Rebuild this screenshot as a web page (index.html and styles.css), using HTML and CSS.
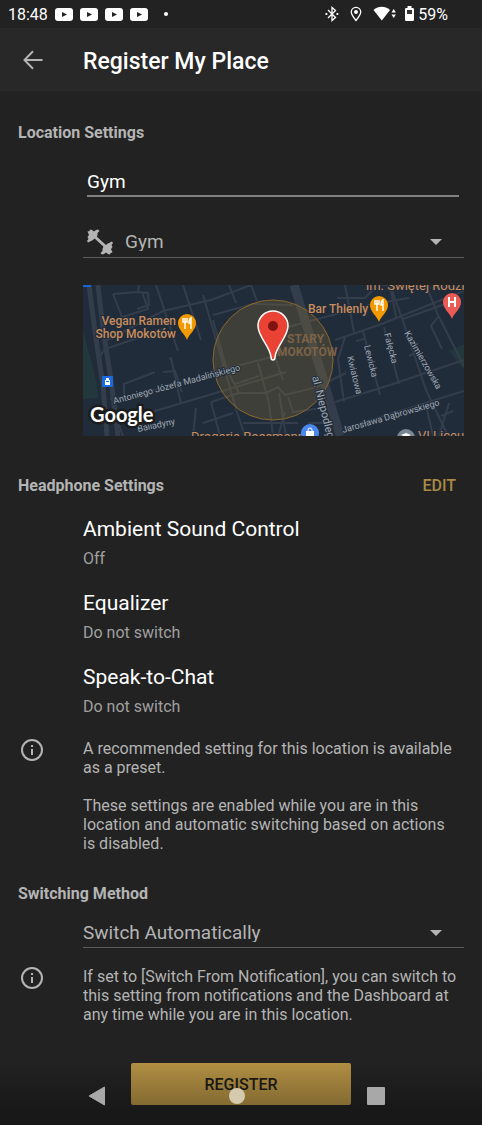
FILE: index.html
```html
<!DOCTYPE html>
<html lang="en">
<head>
<meta charset="utf-8">
<meta name="viewport" content="width=device-width, initial-scale=1">
<title>Register My Place</title>
<link rel="stylesheet" href="styles.css">
</head>
<body>
<div class="status">
  <span class="clock">18:48</span>
  <span class="notices">
    <svg class="video" viewBox="0 0 18 13"><rect width="18" height="13" rx="3"/><path d="M7 4l5 2.5L7 9z"/></svg>
    <svg class="video" viewBox="0 0 18 13"><rect width="18" height="13" rx="3"/><path d="M7 4l5 2.5L7 9z"/></svg>
    <svg class="video" viewBox="0 0 18 13"><rect width="18" height="13" rx="3"/><path d="M7 4l5 2.5L7 9z"/></svg>
    <svg class="video" viewBox="0 0 18 13"><rect width="18" height="13" rx="3"/><path d="M7 4l5 2.5L7 9z"/></svg>
  </span>
  <span class="more"></span>
  <span class="signals">
    <svg width="14" height="16" viewBox="0 0 14 16" fill="none" stroke="#fff" stroke-width="1.3"><path d="M3 4l7.500 7.500L7 14.500V1.500l3.500 3L3 12"/><path d="M0.500 8h1.800M11.500 8h1.800" stroke-width="2"/></svg>
    <svg width="12" height="16" viewBox="0 0 12 16" fill="none" stroke="#fff" stroke-width="1.300"><path d="M6 14.500C3 10.800 1.300 8.300 1.300 6a4.700 4.700 0 0 1 9.400 0c0 2.300-1.700 4.800-4.700 8.500z"/><circle cx="6" cy="6" r="1.300" fill="#fff"/></svg>
    <svg width="24" height="16" viewBox="0 0 24 16" fill="#fff"><path d="M0.500 4C5.500-.3 12-.3 17 4L8.800 14.500z"/><path d="M18.500 6.500L20.700 3l2.200 3.500zM18.500 8.500h4.400L20.700 12z"/></svg>
    <svg width="9" height="16" viewBox="0 0 9 16"><path d="M2.500 0h4v2h1.200q1.300 0 1.300 1.300v10.400q0 1.300-1.300 1.300H1.300Q0 15 0 13.700V3.300Q0 2 1.300 2h1.200z" fill="#fff"/><path d="M2 4h5v4H2z" fill="#333"/></svg>
    <span class="battery">59%</span>
  </span>
</div>

<header class="appbar">
  <button class="back" type="button" aria-label="Back">
    <svg width="20" height="20" viewBox="0 0 20 20" fill="none" stroke="#b4b4b4" stroke-width="2"><path d="M19.500 10H2M10 1.200L1.500 10l8.500 8.800"/></svg>
  </button>
  <h1>Register My Place</h1>
</header>

<main>
  <section class="location">
    <h2>Location Settings</h2>
    <div class="fields">
      <input class="name" type="text" value="Gym" aria-label="Place name">
      <div class="picker kind">
        <svg class="dumbbell" viewBox="0 0 26 26" fill="#b4b4b4"><path d="M7 7l12 11" stroke="#b4b4b4" stroke-width="3"/><path d="M0.500 2.500L2.500 2 3 .5 5 1l2 1.500L9 1l2-.5 1.500 1.500-2 2V6l-1 2.500L7.500 9.500 6 11l-3 1.500L1 13.500 0 12l1.500-2L.5 8 2 6z"/><path d="M25.500 23.500L23.500 24l-.5 1.500-2-.5-2-1.500-2 1.500-2 .5-1.500-1.500 2-2V20l1-2.500 2-1 1.500-1.500 3-1.500 2-1 1 1.500-1.500 2 1 2-1.500 2z"/></svg>
        <select aria-label="Place type"><option>Gym</option></select>
        <svg class="caret" viewBox="0 0 12 6"><path d="M0 0h12L6 6z"/></svg>
      </div>
      <svg class="map" viewBox="0 0 381 151" role="img" aria-label="Map of the place">
        <rect width="381" height="151" fill="#212c3b"/>
        <path d="M0 45C6 70 15 95 15 113L0 114z" fill="#22383c"/>
        <path d="M381 59l-15 7 15 19z" fill="#22383c"/>
        <g fill="none" stroke="#333d4b" stroke-width="2">
          <path d="M6 0C12 50 17 80 20 100l4 51M15 0c5 50 10 75 13 95l7 56" stroke-width="5"/>
          <path d="M211 0l28 90 18 61" stroke-width="9"/>
          <path d="M20 65L80 44M20 57l60-31 48-11 40-15M20 66l-4 8M30 9l25-2 1-7M30 9l9 23 26-8-6-17M55 7l10 1 1 12-12 4M73 0l22 66M100 0l18 55M146 0l7 18M168 0l6 16"/>
          <path d="M40 151l-5-14 118-35 50-15M41 113V99l31-12M80 87l12-1 7 21M86 74l2-1 10 46M130 35l14 50 12 23-28 9M128 117l9 34M155 108h28l12-6 7 8 32-8 29-14M190 66l10 29M175 78l11 40 4 33M196 108l7 43M152 99l24-8M160 138h55M205 112l5 15 30-4M120 10l34 117 8 24"/>
          <path d="M27 114c50-8 80-19 119-31l58-15M130 30l40-11 40 1M205 42l85-23 36-6M252 55l44-15L381 6M252 117l55-17 74-25M262 143l119-37M321 0l-22 0M262 52l-7 22 6 43M262 0l9 47M280 46l17 64M301 42l15 57M307 0l13 36 23 69 22 46M343 0l12 30 26 51M355 32l-7 9 11 23M307 0l6 32M320 34l51-18M343 120l7 31M366 118l-10 33M254 13h28l10-10M326 71l8-4M358 131l12-5M273 56l8-2M110 151l3-28M195 151l7-24M150 128l-30 10M225 138h22"/>
        </g>
        <circle cx="190" cy="75" r="60" fill="#aa8431" fill-opacity=".22" stroke="#8b672b"/>
        <g class="poi">
          <text x="93" y="40" text-anchor="end">Vegan Ramen</text>
          <text x="93" y="53" text-anchor="end">Shop Mokotów</text>
          <text x="225" y="28">Bar Thienly</text>
          <text x="283" y="5" class="wide">im. Świętej Rodziny</text>
          <text x="108" y="156" class="wide">Drogeria Rossmann</text>
          <text x="335" y="155" class="wide">VI Liceum</text>
        </g>
        <g class="district"><text x="204" y="58">STARY</text><text x="194" y="71">MOKOTÓW</text></g>
        <g class="street">
          <text transform="translate(31 119) rotate(-15)">Antoniego Józefa Madalińskiego</text>
          <text transform="translate(55 147) rotate(-12)">Balladyny</text>
          <text transform="translate(229 92) rotate(76)" class="avenue">al. Niepodległości</text>
          <text transform="translate(264 72) rotate(76)">Kwiatowa</text>
          <text transform="translate(281 61) rotate(76)">Lewicka</text>
          <text transform="translate(301 49) rotate(75)">Fałęcka</text>
          <text transform="translate(321 48) rotate(60)">Kazimierzowska</text>
          <text transform="translate(260 148) rotate(-16)">Jarosława Dąbrowskiego</text>
        </g>
        <g transform="translate(104 38)"><path d="M0 17C-2 11-9 7-9 0a9 9 0 0 1 18 0C9 7 2 11 0 17z" fill="#f29900"/><path d="M-4-5v4h4v-4M-2-5V6M4 6V-5Q2-4 2 0h2" fill="none" stroke="#fff" stroke-width="1.400"/></g>
        <g transform="translate(296 20)"><path d="M0 17C-2 11-9 7-9 0a9 9 0 0 1 18 0C9 7 2 11 0 17z" fill="#f29900"/><path d="M-4-5v4h4v-4M-2-5V6M4 6V-5Q2-4 2 0h2" fill="none" stroke="#fff" stroke-width="1.400"/></g>
        <g transform="translate(369 17)"><path d="M0 17C-2 11-9 7-9 0a9 9 0 0 1 18 0C9 7 2 11 0 17z" fill="#ea5b56"/><path d="M-3-5V5M3-5V5M-3 0h6" fill="none" stroke="#fff" stroke-width="2"/></g>
        <g transform="translate(227 148)"><circle r="9" fill="#4a87ee"/><path d="M-4-2h8v7h-8z" fill="#fff"/><path d="M-2-2v-1a2 2 0 0 1 4 0v1" fill="none" stroke="#fff"/></g>
        <g transform="translate(323 153)"><circle r="9" fill="#7b8794"/><path d="M-5-3l5-2 5 2-5 2z" fill="#fff"/></g>
        <path d="M0 0h8v2H0z" fill="#1967d2"/>
        <rect x="19" y="91" width="11" height="11" rx="1" fill="#1a6ae0"/><path d="M23 93h3v2h1v5h-5v-5h1z" fill="#fff"/><path d="M23 96h3v1h-3z" fill="#1a6ae0"/>
        <path d="M190 75c-1 0-2-1-2-3-1-11-13-20-13-31a15 15 0 0 1 30 0c0 11-12 20-13 31 0 2-1 3-2 3z" fill="#ea4335" stroke="#fff" stroke-width="1.500"/>
        <circle cx="190" cy="41" r="5" fill="#811411"/>
        <text class="brand" x="7" y="137">Google</text>
      </svg>
    </div>
  </section>

  <section class="headphone">
    <div class="heading"><h2>Headphone Settings</h2><button class="edit" type="button">EDIT</button></div>
    <dl class="settings">
      <div><dt>Ambient Sound Control</dt><dd>Off</dd></div>
      <div><dt>Equalizer</dt><dd>Do not switch</dd></div>
      <div><dt>Speak-to-Chat</dt><dd>Do not switch</dd></div>
    </dl>
    <div class="note">
      <svg class="info" viewBox="0 1 24 22"><circle cx="12" cy="12" r="10"/><path d="M12 11v6M12 7v2"/></svg>
      <div class="copy">
        <p>A recommended setting for this location is available as a preset.</p>
        <p>These settings are enabled while you are in this location and automatic switching based on actions is disabled.</p>
      </div>
    </div>
  </section>

  <section class="switching">
    <h2>Switching Method</h2>
    <div class="picker method">
      <select aria-label="Switching method"><option>Switch Automatically</option></select>
      <svg class="caret" viewBox="0 0 12 6"><path d="M0 0h12L6 6z"/></svg>
    </div>
    <div class="note">
      <svg class="info" viewBox="0 1 24 22"><circle cx="12" cy="12" r="10"/><path d="M12 11v6M12 7v2"/></svg>
      <div class="copy"><p>If set to [Switch From Notification], you can switch to this setting from notifications and the Dashboard at any time while you are in this location.</p></div>
    </div>
  </section>
  <button class="register" type="button">REGISTER</button>
</main>

<nav class="system" aria-label="System">
  <button type="button" aria-label="Back"><svg width="18" height="20" viewBox="0 0 18 20"><path d="M16.500 1v18L1 10z" fill="#a8a8a8" stroke="#a8a8a8" stroke-linejoin="round"/></svg></button>
  <button type="button" aria-label="Home"><svg width="18" height="20" viewBox="0 0 18 20"><circle cx="9" cy="10" r="8" fill="#d5c9ae"/></svg></button>
  <button type="button" aria-label="Recent apps"><svg width="18" height="20" viewBox="0 0 18 20"><rect y="1" width="18" height="18" rx="1" fill="#a8a8a8"/></svg></button>
</nav>
</body>
</html>
```
FILE: styles.css
```css
* { box-sizing: border-box; }

body {
  margin: 0;
  min-height: 100vh;
  background: #222;
  color: #b4b4b4;
  font-family: Roboto, "Liberation Sans", sans-serif;
  font-size: 16px;
  line-height: 19px;
}

h1, h2, p, dl, dd { margin: 0; }
svg { display: block; flex: none; }
button, input, select { font: inherit; color: inherit; background: none; border: 0; border-radius: 0; padding: 0; margin: 0; }
button { cursor: pointer; }

.status {
  display: flex;
  align-items: center;
  height: 28px;
  padding: 0 34px 0 8px;
  color: #fff;
}
.clock { width: 47px; }
.notices { display: flex; gap: 7px; }
.video { width: 18px; height: 13px; fill: #fff; }
.video path { fill: #222; }
.more { width: 4px; height: 4px; margin-left: 16px; border-radius: 50%; background: #fff; }
.signals { display: flex; align-items: center; gap: 8px; margin-left: auto; }
.signals svg:nth-child(2) { margin: 0 3px; }
.battery { margin-left: -4px; }

.appbar {
  display: flex;
  align-items: center;
  height: 64px;
  padding-left: 23px;
  background: #282828;
  border-bottom: 1px solid #242424;
}
.back { width: 60px; }
h1 { padding-top: 4px; font-size: 23px; font-weight: 500; line-height: 28px; color: #fff; }

h2 { font-size: 16px; font-weight: 700; line-height: 20px; color: #b4b4b4; }
main { padding: 31px 18px 20px; }

.fields { display: flex; flex-direction: column; margin: 24px 0 0 65px; }
.name {
  height: 30px;
  margin: 0 5px 29px 4px;
  border-bottom: 2px solid #808080;
  color: #fff;
  font-size: 19px;
  outline: 0;
}
.picker { display: flex; align-items: center; border-bottom: 1px solid #5c5c5c; }
.picker select { flex: 1; min-width: 0; height: 31px; appearance: none; font-size: 19px; }
.kind { padding-left: 4px; }
.kind select { margin-left: 12px; }
.dumbbell { width: 26px; height: 26px; }
.caret { width: 12px; height: 6px; margin-right: 22px; fill: #b4b4b4; }
.map { width: 100%; height: auto; margin-top: 27px; font-family: Roboto, sans-serif; }
.poi { font-size: 12px; font-weight: 500; fill: #c98d5b; }
.poi .wide { font-size: 13px; font-weight: 400; }
.poi text, .street text { stroke: #212c3b; stroke-width: 2px; paint-order: stroke; }
.street { font-size: 9px; fill: #a0a8b2; }
.street .avenue { font-size: 11px; }
.district { font-size: 12px; font-weight: 700; fill: #7c6247; }
.brand { font-family: Lato, sans-serif; font-size: 20px; font-weight: 700; fill: #fff; stroke: #1c1c1c; stroke-width: 5px; stroke-linejoin: round; paint-order: stroke; }

.headphone { margin-top: 40px; }
.heading { display: flex; justify-content: space-between; padding-right: 8px; }
.edit { color: #a98a43; font-weight: 500; line-height: 20px; }
.settings { display: grid; gap: 21px; margin: 20px 0 0 65px; }
dt { font-size: 21px; line-height: 26px; color: #fff; }
dd { margin-top: 7px; line-height: 20px; color: #a0a0a0; }

.note { display: grid; grid-template-columns: 65px 1fr; margin-top: 22px; padding-right: 6px; }
.info { width: 24px; height: 22px; margin-left: 2px; fill: none; stroke: #b4b4b4; stroke-width: 2px; }
.copy { display: grid; gap: 19px; }

.switching { margin-top: 31px; }
.method { margin: 14px 0 0 65px; }
.method select { height: 29px; }
.switching .note { margin-top: 19px; }

.register {
  display: block;
  width: 220px;
  height: 42px;
  margin: 39px auto 0;
  border-radius: 2px;
  background: #b08e43;
  color: #1d1c19;
  font-weight: 500;
}

.system {
  position: fixed;
  inset: auto 0 0;
  display: flex;
  justify-content: space-between;
  padding: 22px 97px 19px 88px;
  background: linear-gradient(rgba(0, 0, 0, 0), rgba(0, 0, 0, .26) 70%, rgba(0, 0, 0, .3));
}
```
